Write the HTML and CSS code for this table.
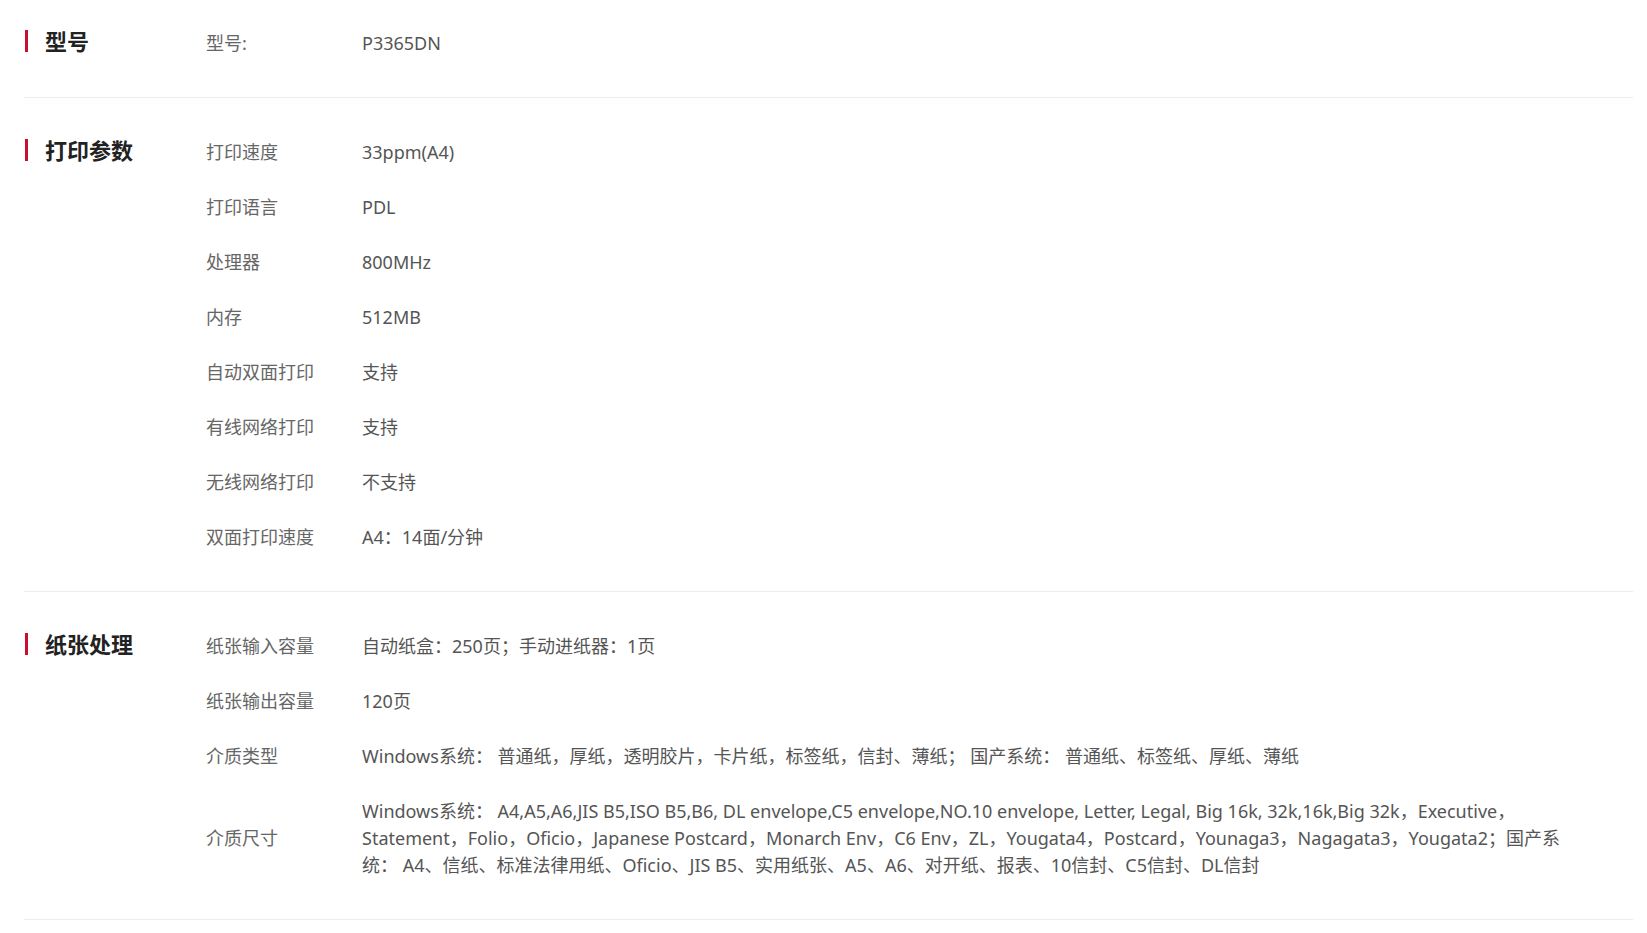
FILE: index.html
```html
<!DOCTYPE html>
<html lang="zh-CN">
<head>
<meta charset="utf-8">
<title>规格参数</title>
<link rel="stylesheet" href="styles.css">
</head>
<body>
<div class="specs">
  <section class="group">
    <h2 class="group-title">型号</h2>
    <div class="rows">
      <div class="row"><div class="label">型号:</div><div class="value">P3365DN</div></div>
    </div>
  </section>
  <section class="group">
    <h2 class="group-title">打印参数</h2>
    <div class="rows">
      <div class="row"><div class="label">打印速度</div><div class="value">33ppm(A4)</div></div>
      <div class="row"><div class="label">打印语言</div><div class="value">PDL</div></div>
      <div class="row"><div class="label">处理器</div><div class="value">800MHz</div></div>
      <div class="row"><div class="label">内存</div><div class="value">512MB</div></div>
      <div class="row"><div class="label">自动双面打印</div><div class="value">支持</div></div>
      <div class="row"><div class="label">有线网络打印</div><div class="value">支持</div></div>
      <div class="row"><div class="label">无线网络打印</div><div class="value">不支持</div></div>
      <div class="row"><div class="label">双面打印速度</div><div class="value">A4：14面/分钟</div></div>
    </div>
  </section>
  <section class="group">
    <h2 class="group-title">纸张处理</h2>
    <div class="rows">
      <div class="row"><div class="label">纸张输入容量</div><div class="value">自动纸盒：250页；手动进纸器：1页</div></div>
      <div class="row"><div class="label">纸张输出容量</div><div class="value">120页</div></div>
      <div class="row"><div class="label">介质类型</div><div class="value">Windows系统： 普通纸，厚纸，透明胶片，卡片纸，标签纸，信封、薄纸； 国产系统： 普通纸、标签纸、厚纸、薄纸</div></div>
      <div class="row row-multi"><div class="label">介质尺寸</div><div class="value">Windows系统： A4,A5,A6,JIS B5,ISO B5,B6, DL envelope,C5 envelope,NO.10 envelope, Letter, Legal, Big 16k, 32k,16k,Big 32k，Executive，Statement，Folio，Oficio，Japanese Postcard，Monarch Env，C6 Env，ZL，Yougata4，Postcard，Younaga3，Nagagata3，Yougata2；国产系统： A4、信纸、标准法律用纸、Oficio、JIS B5、实用纸张、A5、A6、对开纸、报表、10信封、C5信封、DL信封</div></div>
    </div>
  </section>
</div>
</body>
</html>
```

FILE: styles.css
```css
html, body {
  margin: 0;
  padding: 0;
  background: #fff;
}

body {
  font-family: "Noto Sans", "Noto Sans CJK SC", sans-serif;
  font-size: 18px;
  color: #555;
}

.specs {
  padding: 0 14px 0 24px;
}

.group {
  display: flex;
  align-items: flex-start;
  padding: 27px 0 26px;
  border-bottom: 1px solid #ececec;
}

.group:first-child {
  padding-top: 16px;
}

.group-title {
  flex: 0 0 182px;
  display: flex;
  align-items: center;
  margin: 11px 0 0;
  padding-left: 1px;
  box-sizing: border-box;
  height: 27px;
  font-family: "Noto Sans CJK SC", sans-serif;
  font-size: 22px;
  font-weight: bold;
  color: #222;
  line-height: 27px;
}

.group-title::before {
  content: "";
  display: block;
  width: 3px;
  height: 22px;
  margin-right: 17px;
  background: #c8102e;
}

.rows {
  flex: 1;
  min-width: 0;
}

.row {
  display: flex;
  align-items: center;
  padding: 14px 0;
  line-height: 27px;
}

.label {
  flex: 0 0 156px;
  color: #666;
}

.value {
  flex: 1;
  min-width: 0;
  padding-right: 40px;
  color: #555;
}
```
